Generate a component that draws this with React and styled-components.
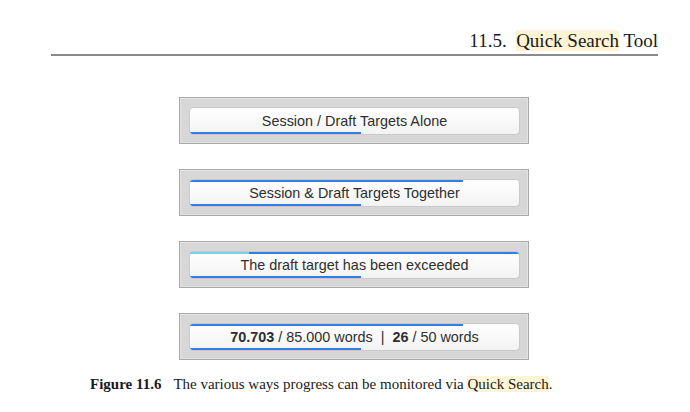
import React from 'react';
import styled, { createGlobalStyle } from 'styled-components';

const GlobalStyle = createGlobalStyle`
  html, body {
    margin: 0;
    padding: 0;
    background: #fff;
  }
  body {
    width: 690px;
    height: 412px;
    overflow: hidden;
  }
`;

const panels = [
  { label: 'Session / Draft Targets Alone', top: null, bottom: 52 },
  { label: 'Session & Draft Targets Together', top: 83, bottom: 52 },
  { label: 'The draft target has been exceeded', top: 100, over: 18, bottom: 52 },
  { label: 'counts', top: 83, bottom: 52 },
];

const App = () => {
  return (
    <Page>
      <GlobalStyle />
      <Header>
        <HeaderText>
          11.5.&nbsp;&nbsp;<Mark>Quick Search</Mark> Tool
        </HeaderText>
      </Header>
      <Figure>
        {panels.map((p, i) => (
          <Panel key={i}>
            <Field>
              {p.top !== null && (
                <TopBar style={{ width: `${p.top}%` }} />
              )}
              {p.over && <OverBar style={{ width: `${p.over}%` }} />}
              {p.label === 'counts' ? (
                <Label>
                  <b>70.703</b> / 85.000 words &nbsp;|&nbsp; <b>26</b> / 50 words
                </Label>
              ) : (
                <Label>{p.label}</Label>
              )}
              <BottomBar style={{ width: `${p.bottom}%` }} />
            </Field>
          </Panel>
        ))}
      </Figure>
      <Caption>
        <CaptionNum>Figure 11.6</CaptionNum>
        <span>
          The various ways progress can be monitored via <Mark>Quick Search</Mark>.
        </span>
      </Caption>
    </Page>
  );
};

export default App;

const Page = styled.div`
  display: flex;
  flex-direction: column;
  width: 690px;
  height: 412px;
  font-family: 'Liberation Serif', 'Times New Roman', serif;
  color: #1a1a1a;
`;

const Header = styled.div`
  display: flex;
  justify-content: flex-end;
  margin: 29px 32px 0 51px;
  padding-bottom: 1px;
  border-bottom: 2px solid #8a8a8a;
`;

const HeaderText = styled.div`
  font-size: 19px;
  line-height: 24px;
  white-space: pre;
`;

const Mark = styled.span`
  background: #fdf5d6;
`;

const Figure = styled.div`
  display: flex;
  flex-direction: column;
  gap: 25px;
  margin: 41px 0 0 179px;
`;

const Panel = styled.div`
  box-sizing: border-box;
  width: 350px;
  height: 47px;
  padding: 9px 8px 8px 9px;
  background: #d7d7d7;
  border: 1px solid #a9a9a9;
  box-shadow: inset 0 0 0 1px #e2e2e2;
`;

const Field = styled.div`
  position: relative;
  box-sizing: border-box;
  height: 28px;
  display: flex;
  align-items: center;
  justify-content: center;
  border-radius: 4px;
  background: linear-gradient(#ffffff, #f3f3f3);
  border: 1px solid #c9c9c9;
  overflow: hidden;
`;

const Bar = styled.div`
  position: absolute;
  left: 0;
  height: 2px;
  background: #2f7cf0;
`;

const TopBar = styled(Bar)`
  top: 0;
`;

const OverBar = styled(Bar)`
  top: 0;
  background: #72d3f2;
`;

const BottomBar = styled(Bar)`
  bottom: 0;
`;

const Label = styled.div`
  font-family: 'Liberation Sans', Arial, sans-serif;
  font-size: 14.4px;
  color: #2e2e2e;
  white-space: pre;
  b {
    font-weight: bold;
  }
`;

const Caption = styled.div`
  display: flex;
  gap: 12px;
  margin: 13px 0 0 90px;
  font-size: 15px;
  line-height: 22px;
`;

const CaptionNum = styled.span`
  font-weight: bold;
`;
